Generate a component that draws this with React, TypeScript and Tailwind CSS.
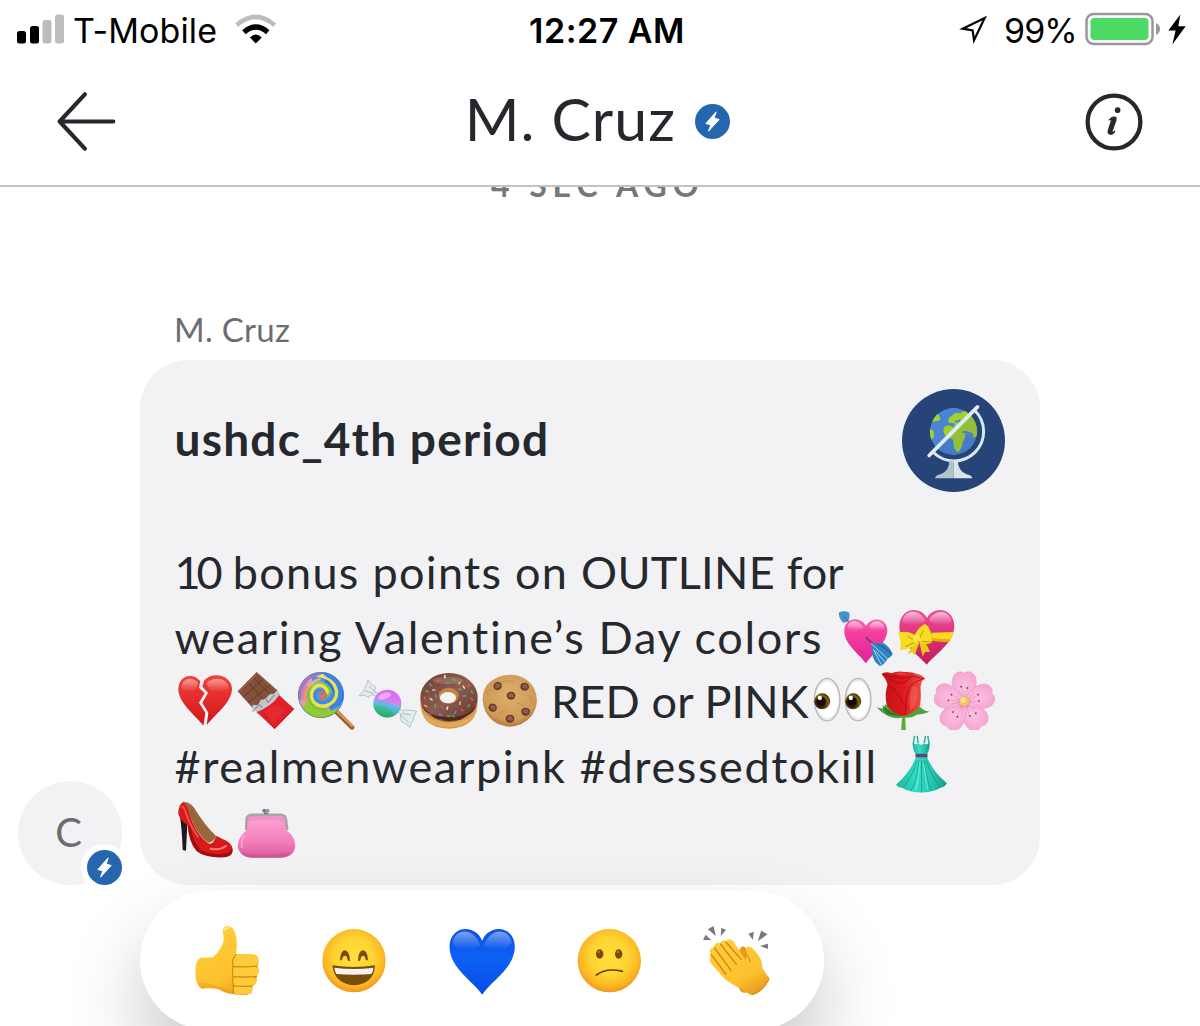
import React from "react";

type ArtProps = { box: string; label: string; className?: string; children: React.ReactNode };

function Emoji({ box, label, className = "h-[60px] w-[61px]", children }: ArtProps) {
  return (
    <svg viewBox={box} role="img" aria-label={label} className={`${className} block shrink-0`}>
      {children}
    </svg>
  );
}

function Gradients() {
  return (
    <svg className="absolute h-0 w-0" aria-hidden="true">
      <defs>
        <linearGradient id="pink" x1="0" y1="0" x2="0" y2="1">
          <stop offset="0" stopColor="#f765ad" />
          <stop offset="0.35" stopColor="#f43c9d" />
          <stop offset="1" stopColor="#e3209a" />
        </linearGradient>
        <linearGradient id="deepPink" x1="0" y1="0" x2="0" y2="1">
          <stop offset="0" stopColor="#f04c98" />
          <stop offset="1" stopColor="#c41755" />
        </linearGradient>
        <linearGradient id="shine" x1="0" y1="0" x2="0" y2="1">
          <stop offset="0" stopColor="#fff" stopOpacity="0.65" />
          <stop offset="1" stopColor="#fff" stopOpacity="0" />
        </linearGradient>
        <linearGradient id="red" x1="0" y1="0" x2="0" y2="1">
          <stop offset="0" stopColor="#f0423b" />
          <stop offset="1" stopColor="#d41419" />
        </linearGradient>
        <radialGradient id="face" cx="0.5" cy="0.44" r="0.58">
          <stop offset="0" stopColor="#ffe03a" />
          <stop offset="0.5" stopColor="#fed532" />
          <stop offset="0.8" stopColor="#fbb824" />
          <stop offset="0.95" stopColor="#f19a1c" />
          <stop offset="1" stopColor="#e3860f" />
        </radialGradient>
        <linearGradient id="hand" x1="0" y1="0" x2="0.6" y2="1">
          <stop offset="0" stopColor="#ffd03c" />
          <stop offset="0.75" stopColor="#fdc12d" />
          <stop offset="1" stopColor="#eda322" />
        </linearGradient>
        <linearGradient id="blue" x1="0" y1="0" x2="0" y2="1">
          <stop offset="0" stopColor="#0c54e6" />
          <stop offset="0.45" stopColor="#0d60f5" />
          <stop offset="1" stopColor="#0a4be6" />
        </linearGradient>
        <radialGradient id="iris" cx="0.4" cy="0.6" r="0.6">
          <stop offset="0" stopColor="#1f0f05" />
          <stop offset="0.5" stopColor="#3d1f08" />
          <stop offset="0.8" stopColor="#7d6a12" />
          <stop offset="1" stopColor="#4a3208" />
        </radialGradient>
        <radialGradient id="eyeWhite" cx="0.5" cy="0.5" r="0.5">
          <stop offset="0.8" stopColor="#fff" />
          <stop offset="1" stopColor="#d9d9dd" />
        </radialGradient>
        <linearGradient id="rose" x1="0" y1="0" x2="1" y2="0">
          <stop offset="0" stopColor="#c21116" />
          <stop offset="0.5" stopColor="#dc191d" />
          <stop offset="1" stopColor="#f0584e" />
        </linearGradient>
        <radialGradient id="petal" cx="0.5" cy="0.5" r="0.55">
          <stop offset="0" stopColor="#fbc3e0" />
          <stop offset="1" stopColor="#f5a6d2" />
        </radialGradient>
        <linearGradient id="teal" x1="0" y1="0" x2="1" y2="0">
          <stop offset="0" stopColor="#1fb8a0" />
          <stop offset="0.4" stopColor="#31dcc2" />
          <stop offset="0.7" stopColor="#25c6ae" />
          <stop offset="1" stopColor="#179987" />
        </linearGradient>
        <linearGradient id="purse" x1="0" y1="0" x2="0" y2="1">
          <stop offset="0" stopColor="#fba0d0" />
          <stop offset="0.6" stopColor="#f27cba" />
          <stop offset="1" stopColor="#d85a9b" />
        </linearGradient>
        <radialGradient id="cookie" cx="0.5" cy="0.4" r="0.6">
          <stop offset="0" stopColor="#dfae6d" />
          <stop offset="0.8" stopColor="#d09a57" />
          <stop offset="1" stopColor="#b47838" />
        </radialGradient>
        <linearGradient id="candy" x1="0.6" y1="0" x2="0.4" y2="1">
          <stop offset="0" stopColor="#d86af5" />
          <stop offset="0.42" stopColor="#d97df0" />
          <stop offset="0.52" stopColor="#7fb8ee" />
          <stop offset="0.66" stopColor="#3dbf96" />
          <stop offset="1" stopColor="#2aa36b" />
        </linearGradient>
        <linearGradient id="glaze" x1="0" y1="0" x2="1" y2="1">
          <stop offset="0" stopColor="#6f3d30" />
          <stop offset="0.5" stopColor="#8b5c50" />
          <stop offset="1" stopColor="#623426" />
        </linearGradient>
      </defs>
    </svg>
  );
}

function HeartArrow() {
  return (
    <Emoji box="45 46 183 180" label="heart with arrow">
      <path d="M56 66 Q72 58 88 66 Q91 82 83 92 L71 97 Q57 86 56 66Z" fill="#4a93c8" />
      <path d="M72 78 L88 96" stroke="#3978a8" strokeWidth="4" />
      <path d="M138 218 C118 190 72 160 73 120 C74 78 122 76 138 106 C154 76 201 80 202 118 C202 156 160 186 138 218Z" fill="url(#pink)" />
      <path d="M82 112 C86 84 118 86 131 112 C120 122 96 120 82 112Z M146 108 C160 84 190 88 194 112 C180 122 158 120 146 108Z" fill="url(#shine)" />
      <path d="M140 142 L166 168" stroke="#79406f" strokeWidth="6" strokeLinecap="round" />
      <path d="M153 158 L192 158 Q208 168 218 190 Q208 204 202 204 Q196 220 180 226 Q162 214 158 196Z" fill="#2f83be" />
      <path d="M153 158 L202 204 M160 176 L184 222 M166 180 L194 214" stroke="#a8d7f2" strokeWidth="3" />
      <path d="M172 160 L212 186 M186 162 L216 194" stroke="#1e629c" strokeWidth="3" />
    </Emoji>
  );
}

function HeartRibbon() {
  return (
    <Emoji box="228 46 183 180" label="heart with ribbon">
      <path d="M320 222 C296 192 237 158 238 106 C240 50 302 44 321 82 C340 44 402 50 403 106 C403 156 344 192 320 222Z" fill="url(#deepPink)" />
      <path d="M246 94 C252 54 300 54 316 90 C300 106 262 106 246 94Z M326 90 C342 54 390 56 395 94 C380 108 346 106 326 90Z" fill="url(#shine)" />
      <path d="M334 126 L400 124 Q396 142 388 154 L334 150Z" fill="#f8dc1d" />
      <path d="M334 143 L392 146 L388 154 L334 151Z" fill="#dcae12" />
      <path d="M285 150 L262 192 L276 184 L284 194 L298 156Z M298 154 L308 198 L315 184 L330 184 L316 152Z" fill="#edc818" />
      <path d="M234 126 Q262 118 284 132 Q300 104 316 100 Q338 116 335 156 Q316 164 298 154 Q276 176 240 178 Q246 152 234 126Z" fill="#f8dc22" />
      <path d="M284 132 Q280 144 298 154 M262 136 L278 146 M310 120 L300 140 M256 168 L282 156 M306 152 L332 154" stroke="#c59409" strokeWidth="3" fill="none" />
      <circle cx="290" cy="143" r="10" fill="#fbe64e" />
    </Emoji>
  );
}

function BrokenHeart() {
  return (
    <Emoji box="43 30 183 180" label="broken heart">
      <path d="M119 64 C98 36 54 44 53 88 C54 130 104 166 128 197 L134 158 L115 128 L132 100 L115 83Z" fill="url(#red)" />
      <path d="M130 62 C156 32 214 46 214 88 C212 130 162 164 138 196 L143 158 L125 128 L142 98 L125 80Z" fill="url(#red)" />
      <path d="M62 84 C64 50 98 50 112 68 L108 84 C94 98 76 96 62 84Z M136 70 C158 48 200 52 205 84 C190 98 164 100 148 90Z" fill="url(#shine)" opacity="0.75" />
    </Emoji>
  );
}

function Chocolate() {
  return (
    <Emoji box="226 30 183 180" label="chocolate bar">
      <path d="M288 36 L352 92 L278 146 L231 94Z" fill="#84503a" />
      <path d="M260 64 L312 122 M276 50 L332 108 M248 112 L308 56 M262 128 L330 74" stroke="#653829" strokeWidth="3" />
      <path d="M290 40 L348 92 M236 94 L287 44" stroke="#a87058" strokeWidth="3" />
      <path d="M276 134 L292 136 L300 120 L314 116 L328 102 L340 102 L350 90 L360 106 L290 164 L284 152 L274 158Z" fill="#c4c5c9" />
      <path d="M282 148 L298 134 L304 144 M316 116 L322 128 L342 104" stroke="#7c7d82" strokeWidth="3" fill="none" />
      <path d="M290 156 Q330 140 356 106 L400 146 L342 206Z" fill="#df2027" />
      <path d="M290 156 L342 206 L400 146" stroke="#b9151c" strokeWidth="3" fill="none" />
      <path d="M308 154 L340 134 L376 148 L342 188Z" fill="#f0383b" opacity="0.4" />
    </Emoji>
  );
}

function Lollipop() {
  return (
    <Emoji box="409 30 183 180" label="lollipop">
      <path d="M528 156 L574 202" stroke="#9c5a25" strokeWidth="14" strokeLinecap="round" />
      <path d="M528 153 L574 198" stroke="#dd9650" strokeWidth="7" strokeLinecap="round" />
      <circle cx="481" cy="105" r="69" fill="#4b9be6" />
      <path d="M424 68 A69 69 0 0 0 440 160 Q470 150 450 120 Q440 90 470 70 Q490 56 520 52 A69 69 0 0 0 424 68Z" fill="#cf86b0" />
      <path d="M416 125 A69 69 0 0 0 500 171 Q520 150 500 142 Q452 146 448 112 Q430 118 416 125Z" fill="#dfa09a" />
      <path d="M426 146 A69 69 0 0 0 542 136 Q520 158 486 150 Q452 142 444 118 Q432 134 426 146Z" fill="#8fcb32" />
      <path d="M452 44 Q492 30 524 54 Q554 86 546 118 Q536 146 510 140 Q528 116 514 88 Q488 60 456 76Z" fill="#2c73e0" />
      <g fill="none" strokeLinecap="round">
        <path d="M484 106 Q496 110 500 98 Q498 76 476 76 Q450 82 452 110 Q460 142 494 138 Q530 130 528 92 Q516 50 474 46" stroke="#ece34c" strokeWidth="11" />
        <path d="M484 108 Q506 112 510 94 Q502 66 472 68 Q440 78 444 114 Q456 152 498 148" stroke="#77c443" strokeWidth="7" />
        <path d="M496 44 Q536 58 540 98 Q536 130 512 142" stroke="#3f83e4" strokeWidth="12" />
        <path d="M484 104 Q490 100 486 92 Q474 86 464 98 Q458 122 480 128 Q510 130 518 100" stroke="#3f8ae4" strokeWidth="9" />
        <path d="M484 107 Q474 104 480 96 Q492 92 496 104 Q492 118 480 116" stroke="#e5655d" strokeWidth="7" />
        <path d="M418 114 Q418 54 478 42" stroke="#a974bf" strokeWidth="7" />
        <path d="M432 120 Q434 70 476 58" stroke="#ef9a65" strokeWidth="8" />
      </g>
      <circle cx="481" cy="105" r="68" fill="none" stroke="#4166a6" strokeWidth="2.5" opacity="0.6" />
      <ellipse cx="468" cy="62" rx="34" ry="14" fill="#fff" opacity="0.2" transform="rotate(-24 468 62)" />
    </Emoji>
  );
}

function Candy() {
  return (
    <Emoji box="52 30 183 180" label="candy">
      <path d="M108 110 Q92 98 84 112 Q72 102 55 108 Q68 96 72 86 Q80 72 82 60 Q88 74 104 80 L102 96 L114 100Z" fill="#e2ebee" stroke="#a9b9bf" strokeWidth="2.5" />
      <path d="M174 144 Q182 156 196 150 Q214 150 228 154 Q218 166 218 180 Q210 190 207 203 Q200 190 184 186 Q176 172 180 162 L168 152Z" fill="#e2ebee" stroke="#a9b9bf" strokeWidth="2.5" />
      <path d="M72 92 L98 100 M86 78 L104 98 M182 160 L210 164 M180 164 L204 188" stroke="#9eb0b6" strokeWidth="2.5" />
      <circle cx="140" cy="131" r="42" fill="url(#candy)" />
      <path d="M100 118 Q140 118 176 150 Q172 158 164 164 Q140 134 100 128Z" fill="#68aef0" opacity="0.7" />
      <ellipse cx="132" cy="108" rx="20" ry="9" fill="#fff" opacity="0.4" transform="rotate(-20 132 108)" />
    </Emoji>
  );
}

const sprinkles: [number, number, number, string][] = [
  [313, 50, 85, "#f4f0e0"], [340, 60, 30, "#5fb85c"], [292, 63, 120, "#ef5c55"], [270, 74, 50, "#4f97d9"],
  [260, 94, 30, "#5cb85c"], [280, 90, 0, "#f3a4b8"], [253, 115, 80, "#e85050"], [272, 118, 40, "#f1e6c4"],
  [284, 138, 100, "#5cb85c"], [256, 138, 30, "#f0bf3b"], [305, 142, 60, "#e85050"], [320, 145, 110, "#f4f0e0"],
  [300, 164, 20, "#4f97d9"], [325, 168, 0, "#58b65b"], [344, 158, 120, "#4e8fd0"], [338, 168, 60, "#3aa84d"],
  [365, 150, 40, "#e8524e"], [358, 130, 100, "#e9c94c"], [384, 138, 120, "#58b65b"], [394, 118, 60, "#e65c55"],
  [372, 108, 0, "#47a6d6"], [394, 96, 50, "#55b35a"], [370, 82, 60, "#f2e7cb"], [384, 78, 120, "#e65c55"],
  [358, 88, 20, "#5cb85c"], [322, 68, 10, "#4f97d9"], [356, 70, 130, "#f0c642"], [286, 108, 70, "#4f97d9"],
];

function Donut() {
  return (
    <Emoji box="235 30 183 180" label="doughnut">
      <path d="M239 118 Q236 206 326 206 Q414 204 411 118Z" fill="#d39a4b" />
      <path d="M244 152 Q258 202 326 201 Q392 200 407 152 Q386 184 326 188 Q266 186 244 152Z" fill="#e0aa58" />
      <ellipse cx="325" cy="112" rx="86" ry="73" fill="url(#glaze)" />
      <path d="M242 132 Q250 160 270 160 Q282 180 300 176 Q320 188 340 180 Q360 184 374 168 Q402 160 408 132 Q390 170 326 172 Q260 170 242 132Z" fill="#53291e" />
      <ellipse cx="324" cy="107" rx="30" ry="24" fill="#c3843e" />
      <ellipse cx="322" cy="113" rx="24" ry="17" fill="#f4f4f6" />
      <ellipse cx="322" cy="61" rx="46" ry="11" fill="#fff" opacity="0.15" />
      {sprinkles.map(([x, y, r, c], i) => (
        <rect key={i} x={x - 6} y={y - 2} width="11" height="4.5" rx="2" fill={c} transform={`rotate(${r} ${x} ${y})`} />
      ))}
    </Emoji>
  );
}

const chips: [number, number, number][] = [
  [471, 78, -40], [552, 80, 10], [511, 107, 0], [456, 143, 40], [555, 155, 0], [508, 176, 0],
];

function Cookie() {
  return (
    <Emoji box="418 30 183 180" label="cookie">
      <path d="M508 44 Q556 44 580 84 Q600 126 574 166 Q548 200 504 200 Q456 196 434 154 Q416 112 438 76 Q464 44 508 44Z" fill="url(#cookie)" />
      <path d="M440 100 Q446 84 458 92 M484 66 Q500 58 520 66 M566 106 Q578 116 574 132 M476 160 Q484 150 496 156 M526 132 Q538 126 548 136" stroke="#c28d4b" strokeWidth="3" fill="none" />
      {chips.map(([x, y, r], i) => (
        <g key={i} transform={`translate(${x} ${y}) rotate(${r})`}>
          <ellipse rx="13" ry="12" fill="#633828" />
          <path d="M-10 2 Q-6 -11 4 -8 Q9 -4 10 4 Q2 9 -10 2Z" fill="#8f5d4a" />
        </g>
      ))}
    </Emoji>
  );
}

function Eyes() {
  return (
    <Emoji box="-24.5 240 183 180" label="eyes">
      {[21, 114].map((x) => (
        <g key={x}>
          <ellipse cx={x} cy="329" rx="38.5" ry="64" fill="url(#eyeWhite)" stroke="#b5b5ba" strokeWidth="3.5" />
          <circle cx={x - 15} cy="334" r="24" fill="url(#iris)" />
          <circle cx={x - 18} cy="334" r="13" fill="#160a03" />
          <circle cx={x - 22} cy="324" r="6.5" fill="#fff" />
        </g>
      ))}
    </Emoji>
  );
}

function Rose() {
  return (
    <Emoji box="158.5 240 183 180" label="rose">
      <path d="M246 376 L243 420 L257 420 L255 376Z" fill="#5fab3d" />
      <path d="M194 342 Q196 362 170 352 Q188 374 214 382 Q232 388 250 382 Q274 386 290 374 Q310 372 328 365 Q308 362 300 350 L250 376Z" fill="#4ea237" />
      <path d="M186 344 Q206 366 246 378 Q214 380 196 370Z" fill="#2f7a26" />
      <path d="M184 252 Q196 242 214 250 Q232 241 256 246 Q276 245 290 252 Q304 254 316 267 Q304 268 301 290 Q304 330 298 352 Q276 372 250 378 Q214 372 200 346 Q192 316 202 284 Q198 266 184 252Z" fill="url(#rose)" />
      <path d="M186 253 Q208 264 224 260 Q252 269 274 258 Q292 262 310 266 Q286 272 272 286 Q254 312 256 374 M204 284 Q230 300 248 340 M274 258 Q262 276 240 280 Q222 276 208 266" stroke="#9c0a10" strokeWidth="3" fill="none" opacity="0.75" />
      <path d="M276 292 Q290 284 292 300 Q296 340 272 362 Q262 330 276 292Z" fill="#f4685c" opacity="0.55" />
      <path d="M220 250 Q244 245 262 251 Q246 259 220 250Z" fill="#ea4340" />
    </Emoji>
  );
}

function Blossom() {
  return (
    <Emoji box="341.5 240 183 180" label="cherry blossom">
      {[0, 72, 144, 216, 288].map((a) => (
        <g key={a} transform={`rotate(${a} 432 337)`}>
          <path d="M432 344 C408 318 390 288 398 264 C403 248 420 240 432 250 C446 240 462 248 467 264 C474 288 456 318 432 344Z" fill="url(#petal)" stroke="#ef96c7" strokeWidth="1.5" />
          <path d="M432 328 L426 296 M432 328 L441 300 M432 328 L415 302" stroke="#e283b6" strokeWidth="1.5" />
          <circle cx="423" cy="290" r="2.8" fill="#9a2a5c" />
          <circle cx="442" cy="294" r="2.8" fill="#9a2a5c" />
        </g>
      ))}
      <circle cx="432" cy="336" r="18" fill="#e67aa8" opacity="0.5" />
      <circle cx="432" cy="334" r="15" fill="#f4c35b" />
      <circle cx="429" cy="330" r="8" fill="#fbe48e" />
    </Emoji>
  );
}

function Dress() {
  return (
    <Emoji box="212.5 433.5 183 180" label="dress">
      <path d="M283 436 L279 462 M291 436 L294 458 M316 436 L312 458 M323 436 L327 462" stroke="#23b59f" strokeWidth="4.5" />
      <path d="M278 456 Q288 466 295 458 Q303 468 312 458 Q320 466 328 456 Q330 476 320 492 L287 492 Q276 476 278 456Z" fill="url(#teal)" />
      <path d="M287 500 L321 500 Q340 546 380 578 Q374 590 362 591 Q348 601 334 602 Q304 610 272 602 Q258 601 246 592 Q234 592 228 582 Q270 546 287 500Z" fill="url(#teal)" />
      <path d="M290 510 Q278 560 246 592 M296 510 Q292 566 272 602 M304 510 L304 606 M312 510 Q318 566 334 602 M318 508 Q332 556 362 592" stroke="#169082" strokeWidth="2.5" fill="none" opacity="0.75" />
      <path d="M299 516 Q296 566 286 600 M310 520 Q316 560 322 596" stroke="#68f0dc" strokeWidth="4" fill="none" opacity="0.8" />
      <rect x="286" y="490" width="36" height="11" rx="2" fill="#5a4a78" />
    </Emoji>
  );
}

function HighHeel() {
  return (
    <Emoji box="43 417 183 180" label="high heel">
      <path d="M56 458 Q64 500 66 570 L76 572 L80 492Z" fill="#22181b" />
      <path d="M68 426 Q90 424 106 452 Q130 492 166 528 Q158 548 142 548 Q106 520 86 464Z" fill="#98683d" />
      <path d="M68 425 Q52 434 53 462 Q60 484 80 494 Q86 548 112 574 Q138 592 186 590 Q216 590 216 568 Q214 546 184 536 Q174 530 166 528 Q158 556 142 550 Q104 520 86 462 Q80 436 68 425Z" fill="#d91a1c" />
      <path d="M90 500 Q96 546 122 570 Q150 586 196 580 Q212 576 214 564 Q222 588 190 592 Q132 594 108 574 Q84 548 82 496Z" fill="#a20d10" />
      <path d="M64 440 Q72 442 78 466 Q90 500 112 530" stroke="#f5574e" strokeWidth="5" fill="none" strokeLinecap="round" />
      <path d="M150 566 Q176 572 196 558" stroke="#ff8177" strokeWidth="6" fill="none" strokeLinecap="round" />
    </Emoji>
  );
}

function Purse() {
  return (
    <Emoji box="226 417 183 180" label="purse">
      <path d="M256 510 L258 474 Q262 464 276 464 L360 464 Q374 466 376 476 L380 510" fill="#f391c4" stroke="#a2a5a6" strokeWidth="7" />
      <path d="M264 484 Q316 474 368 484 Q370 508 388 520 Q406 540 403 564 Q398 592 360 593 L272 593 Q236 590 231 560 Q232 534 252 516 Q266 502 264 484Z" fill="url(#purse)" />
      <path d="M250 528 Q240 544 244 562" stroke="#ffc1e2" strokeWidth="5" fill="none" strokeLinecap="round" opacity="0.7" />
      <path d="M246 578 Q316 592 390 576 Q380 592 358 593 L274 593 Q254 592 246 578Z" fill="#c4518d" opacity="0.55" />
      <circle cx="311" cy="452" r="6" fill="#77797b" />
      <circle cx="321" cy="452" r="6" fill="#989b9c" />
      <path d="M310 460 L322 460" stroke="#77797b" strokeWidth="5" />
    </Emoji>
  );
}

const reactionSize = "h-[72px] w-[72px]";

function ThumbsUp() {
  return (
    <Emoji box="63 75 216 216" label="thumbs up" className={reactionSize}>
      <path d="M158 94 Q160 78 174 78 Q190 80 196 100 Q204 126 198 162 L252 163 Q266 168 266 182 Q266 192 262 198 Q268 206 266 216 Q264 224 259 229 Q262 240 258 248 Q254 256 246 258 Q250 270 244 278 Q236 286 214 284 Q170 284 146 268 Q118 262 96 266 Q76 256 76 218 Q76 180 92 173 Q112 174 128 172 Q146 158 158 132 Q164 116 158 94Z" fill="url(#hand)" />
      <path d="M82 248 Q92 270 104 265 Q124 260 146 268 Q172 286 214 284 Q240 286 245 274 Q196 280 160 264 Q120 248 82 248Z" fill="#e39319" opacity="0.4" />
      <g fill="#ffcb37">
        <rect x="188" y="164" width="77" height="34" rx="16" />
        <rect x="188" y="200" width="78" height="29" rx="14" />
        <rect x="189" y="231" width="70" height="26" rx="13" />
        <rect x="190" y="259" width="57" height="23" rx="11" />
      </g>
      <path d="M198 164 Q184 178 189 198 Q186 214 189 230 Q187 244 190 257 Q188 270 192 280 M190 199 Q226 203 262 198 M190 230 Q226 233 260 229 M191 258 Q220 260 248 258" fill="none" stroke="#cf8c1c" strokeWidth="3.5" strokeLinecap="round" />
      <path d="M162 92 Q166 82 178 84" stroke="#ffe884" strokeWidth="5" fill="none" strokeLinecap="round" />
    </Emoji>
  );
}

function Grin() {
  return (
    <Emoji box="444 75 216 216" label="smiling face" className={reactionSize}>
      <circle cx="552" cy="182" r="95" fill="url(#face)" />
      <path d="M510 180 Q512 151 525 151 Q539 153 540 182 Q535 184 533 180 Q531 167 525 167 Q518 167 516 179 Q513 183 510 180Z M564 182 Q565 153 578 151 Q592 151 594 180 Q590 183 587 179 Q585 167 579 167 Q573 167 571 180 Q568 184 564 182Z" fill="#7a4b12" />
      <path d="M487 196 Q550 206 615 196 Q612 252 552 256 Q494 252 487 196Z" fill="#7c4c0b" />
      <path d="M493 203 Q550 211 610 203 Q610 214 604 222 Q552 227 499 222 Q494 212 493 203Z" fill="#f3f3f4" />
    </Emoji>
  );
}

function BlueHeart() {
  return (
    <Emoji box="76.5 75 216 216" label="blue heart" className={reactionSize}>
      <path d="M185 284 C160 244 88 206 87 140 C88 76 164 70 185 122 C206 70 282 76 283 140 C282 206 210 244 185 284Z" fill="url(#blue)" />
      <path d="M96 130 C102 84 158 80 180 136 C150 154 116 152 96 130Z M190 136 C212 80 268 84 274 130 C254 152 220 154 190 136Z" fill="url(#shine)" opacity="0.7" />
    </Emoji>
  );
}

function Confused() {
  return (
    <Emoji box="459 75 216 216" label="confused face" className={reactionSize}>
      <circle cx="568" cy="182" r="95" fill="url(#face)" />
      <ellipse cx="539" cy="162" rx="11" ry="14" fill="#764a10" />
      <ellipse cx="596" cy="162" rx="11" ry="14" fill="#764a10" />
      <circle cx="537" cy="156" r="4" fill="#a67a33" />
      <circle cx="594" cy="156" r="4" fill="#a67a33" />
      <path d="M529 225 Q560 202 607 214" fill="none" stroke="#6b3d0b" strokeWidth="5" strokeLinecap="round" />
    </Emoji>
  );
}

function Clap() {
  return (
    <Emoji box="121.5 135 216 216" label="clapping hands" className={reactionSize}>
      <path d="M128 180 L135 164 L152 180Z M142 148 L159 138 L166 168Z M182 144 L197 149 L181 168Z M264 161 L280 155 L277 180Z M302 152 L321 163 L292 184Z M299 198 L322 191 L323 207Z" fill="#77787b" />
      <path d="M232 316 L240 334 Q250 342 262 336 L290 250 Q270 220 252 200 Q242 196 238 208 L230 230Z" fill="#e59b1c" />
      <path d="M148 236 Q146 244 154 254 L196 300 Q226 320 246 328 L270 345 Q306 344 327 294 Q304 270 304 250 Q300 226 272 202 Q258 194 256 210 Q262 226 256 240 L218 184 Q206 172 196 184 Q184 176 180 190 Q164 184 160 202 Q142 208 150 222Z" fill="url(#hand)" />
      <path d="M196 186 L242 238 M180 192 L228 254 M162 204 L212 272 M152 224 L196 282" stroke="#cf8518" strokeWidth="4" strokeLinecap="round" />
      <path d="M256 222 Q270 232 268 246" stroke="#cc8517" strokeWidth="3" fill="none" />
      <path d="M274 344 Q306 336 326 298 Q310 326 274 344Z" stroke="#da911b" strokeWidth="3" fill="none" />
    </Emoji>
  );
}

function BoltBadge() {
  return (
    <svg viewBox="765.5 312.5 105 105" className="h-[35px] w-[35px] shrink-0" aria-hidden="true">
      <circle cx="818" cy="365" r="52.5" fill="#2566ae" />
      <path d="M829 336 L798 371 L813 375 L806 394 L838 359 L823 355Z" fill="#fff" stroke="#fff" strokeWidth="3" strokeLinejoin="round" />
    </svg>
  );
}

function GlobeAvatar() {
  return (
    <svg viewBox="244.5 56.5 309 309" className="h-[103px] w-[103px] shrink-0" aria-hidden="true">
      <circle cx="399" cy="211" r="154.5" fill="#264478" />
      <clipPath id="globe"><circle cx="399" cy="184" r="71" /></clipPath>
      <g clipPath="url(#globe)">
        <circle cx="399" cy="184" r="71" fill="#4c83d2" />
        <path d="M320 130 L350 130 Q360 138 360 148 Q348 158 330 152Z M320 176 Q342 176 340 190 Q344 200 330 212 L320 206Z" fill="#a2d02f" />
        <path d="M384 158 Q380 142 396 136 Q402 124 420 130 Q428 118 452 124 L480 150 L474 196 L460 202 Q450 190 432 190 Q438 204 426 216 Q424 238 412 246 Q398 238 398 208 L376 198 Q362 180 374 168 Q384 162 400 172 L404 160Z" fill="#a2d02f" />
        <path d="M404 152 Q414 158 418 148 M426 186 Q446 184 458 196" stroke="#4c83d2" strokeWidth="6" fill="none" />
        <path d="M470 114 L470 255 L330 255 Z" fill="#173d77" opacity="0.1" />
      </g>
      <path d="M463 121 A86 86 0 1 1 339 247" fill="none" stroke="#d9e8f5" strokeWidth="9" />
      <path d="M326 256 L471 110" stroke="#e1edf8" strokeWidth="11" strokeLinecap="round" />
      <path d="M386 271 L399 271 L399 324 L343 324 Q347 314 360 312 Q388 302 386 271Z" fill="#b4c2ca" />
      <path d="M399 271 L412 271 Q412 302 438 312 Q452 314 456 324 L399 324Z" fill="#d7e4ea" />
    </svg>
  );
}

function StatusBar() {
  return (
    <div className="grid h-[60px] grid-cols-3 items-center font-[Inter] text-[34px] leading-none text-black">
      <div className="flex items-center pl-[17px]">
        <svg viewBox="0 0 47 30" className="mb-[2px] h-[30px] w-[47px] shrink-0" aria-hidden="true">
          <rect x="0" y="17" width="9" height="12.5" rx="2.5" fill="#000" />
          <rect x="13" y="12" width="9" height="17.5" rx="2.5" fill="#000" />
          <rect x="25.5" y="6" width="9" height="23.5" rx="2.5" fill="#bdbdbd" />
          <rect x="38" y="0.5" width="9" height="29" rx="2.5" fill="#bdbdbd" />
        </svg>
        <span className="mt-[1px] ml-[9px] w-[162px] whitespace-nowrap tracking-[0.1px]">T-Mobile</span>
        <svg viewBox="703 40 124 92" className="mb-[3px] h-[31px] w-[41px] shrink-0" aria-hidden="true">
          <path d="M708 76 Q766 26 823 76" fill="none" stroke="#bdbdbd" strokeWidth="14" />
          <path d="M730 97 Q766 66 802 97" fill="none" stroke="#000" strokeWidth="16" />
          <path d="M748 113 Q766 95 784 113 L766 131Z" fill="#000" />
        </svg>
      </div>
      <div className="mt-[1px] text-center font-semibold">
        <span className="relative left-[7px] whitespace-nowrap tracking-[0.5px]">12:27 AM</span>
      </div>
      <div className="flex items-center justify-end pr-[14px]">
        <svg viewBox="173 43 87 90" className="h-[30px] w-[29px] shrink-0" aria-hidden="true">
          <path d="M253 52 L187 84 L217 89 L221 119Z" fill="none" stroke="#000" strokeWidth="6.5" strokeLinejoin="miter" />
        </svg>
        <span className="mt-[1px] ml-[17px] w-[81px] whitespace-nowrap tracking-[-0.9px]">99%</span>
        <svg viewBox="0 0 75 34" className="mb-[2px] h-[34px] w-[75px] shrink-0" aria-hidden="true">
          <rect x="1.5" y="2" width="66" height="30" rx="7" fill="#fff" stroke="#98989c" strokeWidth="2.5" />
          <rect x="5.5" y="6" width="58" height="22" rx="4" fill="#4cd964" />
          <path d="M71 11 Q75 13 75 17 Q75 21 71 23Z" fill="#98989c" />
        </svg>
        <svg viewBox="806 42 54 92" className="mb-[1px] ml-[8px] h-[31px] w-[18px] shrink-0" aria-hidden="true">
          <path d="M843 43 L807 91 L829 91 L819 133 L859 78 L837 78Z" fill="#000" />
        </svg>
      </div>
    </div>
  );
}

function Header() {
  return (
    <header className="grid h-[127px] grid-cols-[1fr_auto_1fr] items-center border-b-2 border-[#c3c3c5] pb-[2px]">
      <svg viewBox="172 280 178 176" className="ml-[57px] h-[59px] w-[59px]" aria-label="Back">
        <path d="M256 286 L180 368 L256 450 M180 368 L342 368" fill="none" stroke="#25292d" strokeWidth="12.5" strokeLinecap="round" strokeLinejoin="round" />
      </svg>
      <div className="flex items-center pr-[5px]">
        <h1 className="w-[230.5px] -translate-y-[3px] whitespace-nowrap text-[59px] leading-none tracking-[1px]">M. Cruz</h1>
        <BoltBadge />
      </div>
      <svg viewBox="554 278 176 176" className="mr-[57px] h-[58px] w-[58px] justify-self-end" aria-label="Info">
        <circle cx="642" cy="366" r="80" fill="none" stroke="#25292d" strokeWidth="13" />
        <circle cx="653" cy="330" r="8.5" fill="#25292d" />
        <path d="M626 360 Q638 346 649 352 Q650 360 644 374 L636 396 Q642 397 645 392 Q644 404 630 404 Q620 402 625 388 L634 360Z" fill="#25292d" stroke="#25292d" strokeWidth="2" />
      </svg>
    </header>
  );
}

function Line({ children }: { children: React.ReactNode }) {
  return <div className="flex h-[64.5px] items-start whitespace-nowrap leading-[64px]">{children}</div>;
}

function Art({ children }: { children: React.ReactNode }) {
  return <span className="mt-[1px] flex shrink-0">{children}</span>;
}

function Message() {
  return (
    <article className="h-[524.5px] w-[900px] rounded-[48px] bg-[#f2f2f5] pl-[35px]">
      <div className="flex h-[180px] items-start justify-between pt-[29px] pr-[35px]">
        <h2 className="mt-[20px] whitespace-nowrap text-[46px] font-bold leading-[60px] tracking-[1.25px]">ushdc_4th period</h2>
        <GlobeAvatar />
      </div>
      <div className="text-[45px]">
        <Line>
          <span className="whitespace-pre">
            <span className="tracking-[-4px]">1</span>
            <span className="tracking-[-0.5px]">0</span>
            <span className="tracking-[-1px]"> </span>
            <span className="tracking-[1.3px]">bonus points on </span>
            <span className="tracking-[0.3px]">OUTLINE </span>
            <span className="tracking-[0px]">for</span>
          </span>
        </Line>
        <Line>
          <span className="w-[660.5px] tracking-[1.7px]">wearing Valentine’s Day colors</span>
          <Art><HeartArrow /><HeartRibbon /></Art>
        </Line>
        <Line>
          <Art><BrokenHeart /><Chocolate /><Lollipop /><Candy /><Donut /><Cookie /></Art>
          <span className="w-[271.5px] pl-[10.5px] tracking-[0.15px]">RED or PINK</span>
          <Art><Eyes /><Rose /><Blossom /></Art>
        </Line>
        <Line>
          <span className="w-[716.5px] tracking-[1.65px]">#realmenwearpink #dressedtokill</span>
          <Art><Dress /></Art>
        </Line>
        <Line><Art><HighHeel /><Purse /></Art></Line>
      </div>
    </article>
  );
}

export default function App() {
  return (
    <div className="relative flex h-[1026px] w-[1200px] flex-col overflow-hidden bg-white font-['Lato',sans-serif] text-[#25292d]">
      <Gradients />
      <StatusBar />
      <Header />
      <main className="flex min-h-0 flex-1 flex-col overflow-hidden">
        <div className="-mt-[21px] h-[146px] shrink-0 pl-[491px] text-[32px] font-bold leading-[37px] tracking-[5.9px] text-[#75777b]">4 SEC AGO</div>
        <div className="h-[48px] shrink-0 pl-[174px] text-[33px] leading-[34px] tracking-[0.3px] text-[#6b6d70]">M. Cruz</div>
        <div className="flex shrink-0 items-end pl-[17.5px]">
          <div className="relative mr-[18px] flex h-[104px] w-[104px] items-center justify-center rounded-full bg-[#f2f2f5] pr-[2px] pb-[2px] text-[40px] text-[#6b6d70]">
            C
            <span className="absolute -right-[6px] -bottom-[6px] flex rounded-full bg-white p-[6px]"><BoltBadge /></span>
          </div>
          <Message />
        </div>
        <div className="mt-[6.5px] ml-[139.5px] flex h-[139px] w-[684.5px] shrink-0 items-center gap-[55.5px] rounded-full bg-white pl-[51px] shadow-[0_40px_76px_rgba(0,0,0,0.22)]">
          <ThumbsUp />
          <Grin />
          <BlueHeart />
          <Confused />
          <Clap />
        </div>
      </main>
    </div>
  );
}
